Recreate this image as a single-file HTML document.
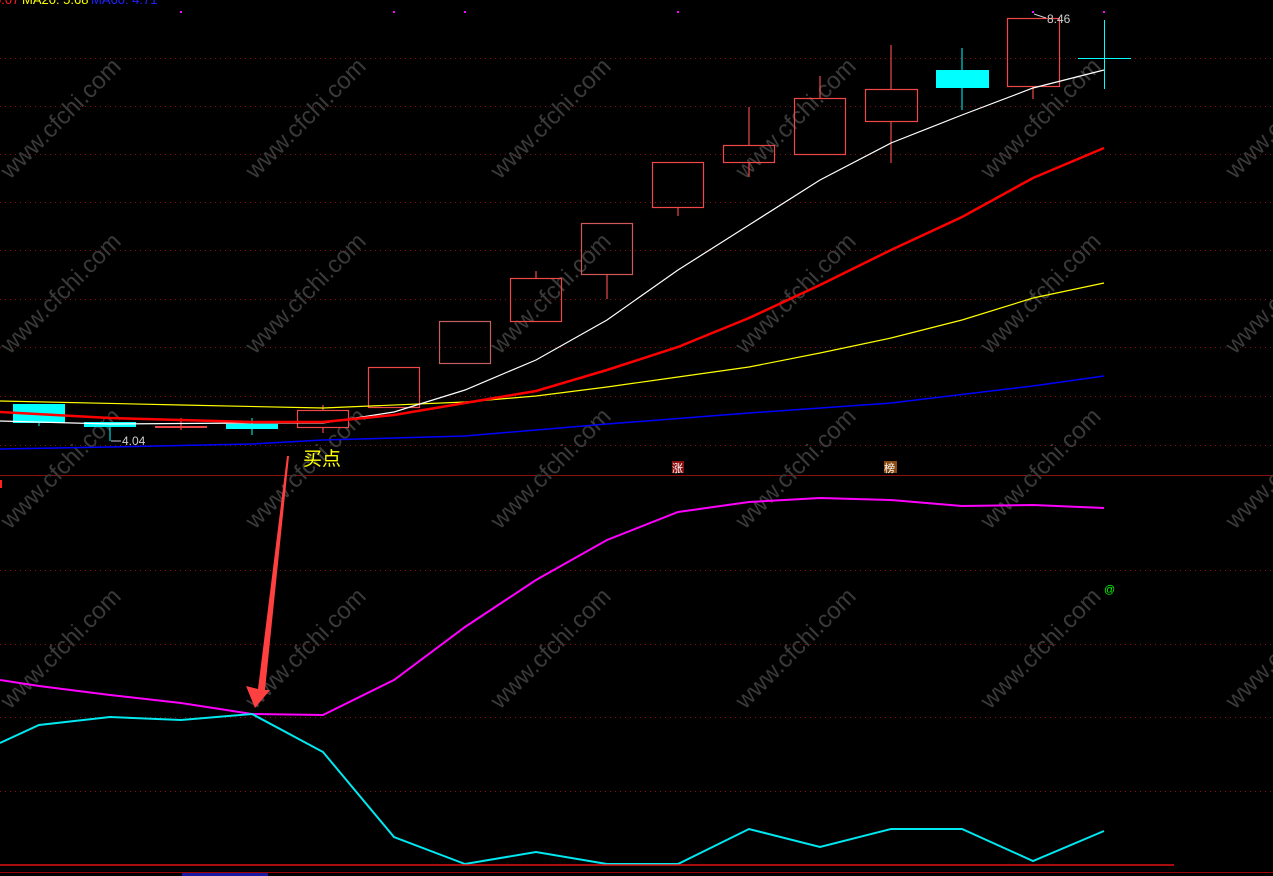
<!DOCTYPE html>
<html><head><meta charset="utf-8"><style>
html,body{margin:0;padding:0;background:#000;width:1273px;height:876px;overflow:hidden}
svg{display:block}
text{font-family:"Liberation Sans","Noto Sans CJK SC",sans-serif}
</style></head><body>
<svg width="1273" height="876" xmlns="http://www.w3.org/2000/svg">
<g stroke="#8a1010" stroke-dasharray="1,4" stroke-width="1">
<line x1="0" x2="1273" y1="58.5" y2="58.5"/><line x1="0" x2="1273" y1="106.5" y2="106.5"/>
<line x1="0" x2="1273" y1="154.5" y2="154.5"/><line x1="0" x2="1273" y1="202.5" y2="202.5"/>
<line x1="0" x2="1273" y1="250.5" y2="250.5"/><line x1="0" x2="1273" y1="299.5" y2="299.5"/>
<line x1="0" x2="1273" y1="347.5" y2="347.5"/><line x1="0" x2="1273" y1="396.5" y2="396.5"/>
<line x1="0" x2="1273" y1="445.5" y2="445.5"/>
<line x1="0" x2="1273" y1="570.5" y2="570.5"/><line x1="0" x2="1273" y1="644.5" y2="644.5"/>
<line x1="0" x2="1273" y1="717.5" y2="717.5"/><line x1="0" x2="1273" y1="791.5" y2="791.5"/>
</g>
<line x1="0" x2="1273" y1="475.5" y2="475.5" stroke="#8a1010"/>
<g fill="#3a3a3a" font-size="24">
<text transform="translate(10,180) rotate(-45)">www.cfchi.com</text>
<text transform="translate(255,180) rotate(-45)">www.cfchi.com</text>
<text transform="translate(500,180) rotate(-45)">www.cfchi.com</text>
<text transform="translate(745,180) rotate(-45)">www.cfchi.com</text>
<text transform="translate(990,180) rotate(-45)">www.cfchi.com</text>
<text transform="translate(1235,180) rotate(-45)">www.cfchi.com</text>
<text transform="translate(10,355) rotate(-45)">www.cfchi.com</text>
<text transform="translate(255,355) rotate(-45)">www.cfchi.com</text>
<text transform="translate(500,355) rotate(-45)">www.cfchi.com</text>
<text transform="translate(745,355) rotate(-45)">www.cfchi.com</text>
<text transform="translate(990,355) rotate(-45)">www.cfchi.com</text>
<text transform="translate(1235,355) rotate(-45)">www.cfchi.com</text>
<text transform="translate(10,530) rotate(-45)">www.cfchi.com</text>
<text transform="translate(255,530) rotate(-45)">www.cfchi.com</text>
<text transform="translate(500,530) rotate(-45)">www.cfchi.com</text>
<text transform="translate(745,530) rotate(-45)">www.cfchi.com</text>
<text transform="translate(990,530) rotate(-45)">www.cfchi.com</text>
<text transform="translate(1235,530) rotate(-45)">www.cfchi.com</text>
<text transform="translate(10,710) rotate(-45)">www.cfchi.com</text>
<text transform="translate(255,710) rotate(-45)">www.cfchi.com</text>
<text transform="translate(500,710) rotate(-45)">www.cfchi.com</text>
<text transform="translate(745,710) rotate(-45)">www.cfchi.com</text>
<text transform="translate(990,710) rotate(-45)">www.cfchi.com</text>
<text transform="translate(1235,710) rotate(-45)">www.cfchi.com</text>
</g>
<text x="-6" y="4" font-size="13" fill="#ff2020">5.07</text>
<text x="22" y="4" font-size="13" fill="#ffff00">MA20: 5.68</text>
<text x="91" y="4" font-size="13" fill="#2020ff">MA60: 4.71</text>
<g fill="#ff00ff"><rect x="180" y="11" width="2" height="2"/><rect x="393" y="11" width="2" height="2"/><rect x="464" y="11" width="2" height="2"/><rect x="677" y="11" width="2" height="2"/><rect x="1032" y="11" width="2" height="2"/><rect x="1103" y="11" width="2" height="2"/></g>
<!-- candles -->
<g stroke="#f04848" fill="none" stroke-width="1.2">
<line x1="181" y1="418" x2="181" y2="430"/><line x1="155" y1="427" x2="207" y2="427" stroke-width="2"/>
<line x1="323" y1="405" x2="323" y2="433"/><rect x="297.5" y="410.5" width="51" height="17" fill="#000"/>
<rect x="368.5" y="367.5" width="51" height="40"/>
<rect x="439.5" y="321.5" width="51" height="42" stroke="#c06060"/>
<line x1="536" y1="271" x2="536" y2="278"/><rect x="510.5" y="278.5" width="51" height="43"/>
<line x1="607" y1="274" x2="607" y2="299"/><rect x="581.5" y="223.5" width="51" height="51" stroke="#d05858"/>
<line x1="678" y1="207" x2="678" y2="216"/><rect x="652.5" y="162.5" width="51" height="45"/>
<line x1="749" y1="107" x2="749" y2="145"/><line x1="749" y1="162" x2="749" y2="177"/><rect x="723.5" y="145.5" width="51" height="17"/>
<line x1="820" y1="76" x2="820" y2="98"/><rect x="794.5" y="98.5" width="51" height="56"/>
<line x1="891" y1="45" x2="891" y2="89"/><line x1="891" y1="121" x2="891" y2="163"/><rect x="865.5" y="89.5" width="52" height="32"/>
<line x1="1033" y1="86" x2="1033" y2="99"/><rect x="1007.5" y="18.5" width="52" height="68"/>
</g>
<g fill="#00ffff" stroke="#00ffff">
<rect x="13" y="404" width="52" height="19" stroke="none"/><line x1="39" y1="423" x2="39" y2="426"/>
<rect x="84" y="422" width="52" height="5" stroke="none"/><line x1="110" y1="427" x2="110" y2="441"/>
<rect x="226" y="424" width="52" height="5" stroke="none"/><line x1="252" y1="418" x2="252" y2="435"/>
<rect x="936" y="70" width="53" height="18" stroke="none"/><line x1="962" y1="48" x2="962" y2="110"/>
<line x1="1104.5" y1="20" x2="1104.5" y2="89"/><line x1="1078" y1="58.5" x2="1131" y2="58.5"/>
</g>
<!-- MAs -->
<polyline fill="none" stroke="#ffff00" stroke-width="1.2" points="0,401 181,405 323,408 465,402 536,396 607,387 678,377 749,367 820,353 891,338 962,320 1033,298 1104,283"/>
<polyline fill="none" stroke="#0000ff" stroke-width="1.5" points="0,449 110,447 252,444 323,440 465,436 607,424 749,413 891,403 1033,386 1104,376"/>
<polyline fill="none" stroke="#ffffff" stroke-width="1.2" points="0,421 110,424 252,423 323,423 394,412 465,390 536,360 607,320 678,270 749,225 820,180 891,143 962,115 1033,88 1104,70"/>
<polyline fill="none" stroke="#ff0000" stroke-width="2.5" points="0,412 110,418 252,422 323,422 394,415 465,403 536,391 607,370 678,347 749,318 820,285 891,250 962,217 1033,178 1104,148"/>
<text x="122" y="445" font-size="12" fill="#d0d0d0">4.04</text>
<line x1="111" y1="441" x2="121" y2="441" stroke="#d0d0d0"/>
<text x="1047" y="23" font-size="12" fill="#d0d0d0">8.46</text>
<line x1="1034" y1="14" x2="1046" y2="18" stroke="#d0d0d0"/>
<text x="303" y="465" font-size="19" fill="#ffff00">买点</text>
<rect x="672" y="461" width="12" height="12" fill="#8a1010"/><text x="672" y="472" font-size="11" fill="#fff">涨</text>
<rect x="884" y="461" width="13" height="12" fill="#8a4a10"/><text x="884" y="472" font-size="11" fill="#fff">榜</text>
<text x="1104" y="593" font-size="11" fill="#00ff00">@</text>
<rect x="0" y="480" width="2" height="8" fill="#ff2020"/>
<!-- lower -->
<polyline fill="none" stroke="#ff00ff" stroke-width="2" points="0,680 39,686 110,695 181,703 252,714 323,715 394,680 465,627 536,580 607,540 678,512 749,502 820,498 891,500 962,506 1033,505 1104,508"/>
<polyline fill="none" stroke="#00e8f0" stroke-width="2" points="0,743 39,725 110,717 181,720 252,714 323,752 394,837 465,864 536,852 607,864 678,864 749,829 820,847 891,829 962,829 1033,861 1104,831"/>
<polygon fill="#ff4040" points="287,456 289,456 265,690 270,690 255,708 246,686 258,689"/>
<line x1="0" x2="1174" y1="865" y2="865" stroke="#e01010" stroke-width="1.5"/>
<line x1="0" x2="1273" y1="872.5" y2="872.5" stroke="#a00000"/>
<rect x="182" y="873" width="86" height="3" fill="#1a1aa0"/>
</svg>
</body></html>
